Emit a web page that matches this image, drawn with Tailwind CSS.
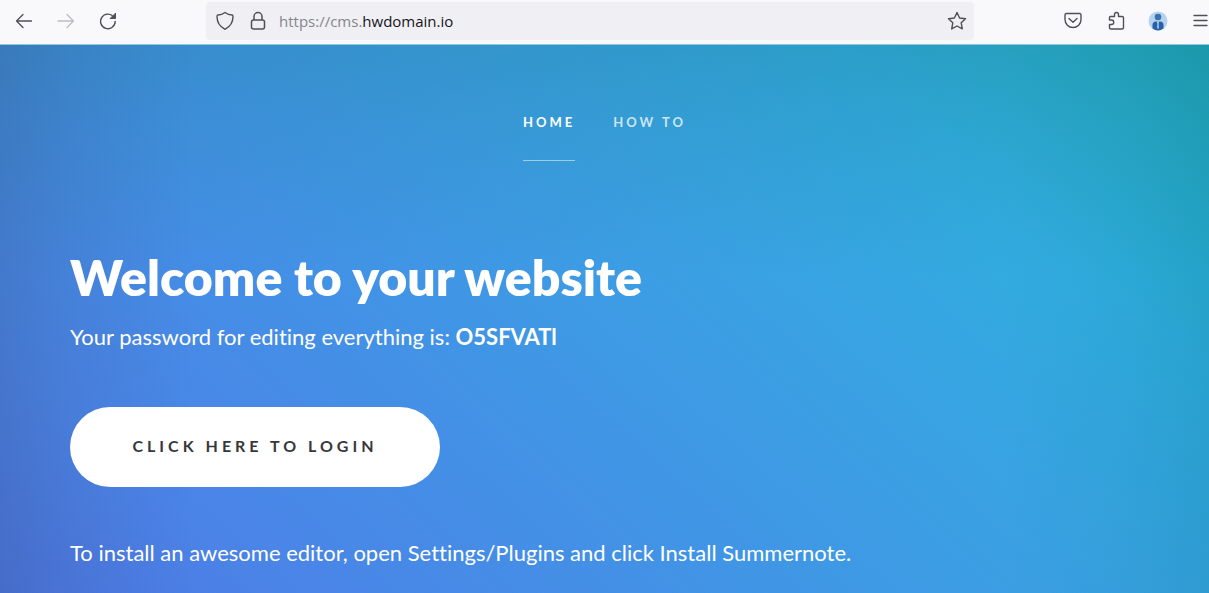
<!DOCTYPE html>
<html lang="en">
<head>
    <meta charset="UTF-8">
    <meta name="viewport" content="width=device-width, initial-scale=1.0">
    <title>Welcome to your website</title>
    <script src="https://cdn.jsdelivr.net/npm/@tailwindcss/browser@4"></script>
</head>
<body class="flex flex-col min-h-screen overflow-x-hidden font-['Lato',sans-serif]">

    <!-- Browser toolbar -->
    <div class="flex items-start h-11 bg-[#f9f9fb] text-[#4f4f56] overflow-hidden">
        <div class="flex items-center gap-[18px] w-[206px] h-[42px] pl-3 shrink-0">
            <button aria-label="Back" class="w-6 flex justify-center">
                <svg class="w-5 h-5" viewBox="0 0 20 20" fill="none" stroke="currentColor" stroke-width="1.3" stroke-linecap="round" stroke-linejoin="round"><path d="M17.500 10H2.500M9 3.500L2.500 10L9 16.500"/></svg>
            </button>
            <button aria-label="Forward" disabled class="w-6 flex justify-center text-[#bdbdc2]">
                <svg class="w-5 h-5" viewBox="0 0 20 20" fill="none" stroke="currentColor" stroke-width="1.3" stroke-linecap="round" stroke-linejoin="round"><path d="M2 10H17.500M11 3.500L17.500 10L11 16.500"/></svg>
            </button>
            <button aria-label="Reload" class="w-6 flex justify-center">
                <svg class="w-5 h-5" viewBox="0 0 20 20" fill="none" stroke="currentColor" stroke-width="1.4" stroke-linecap="round" stroke-linejoin="round"><path d="M17.200 10.500A7.300 7.300 0 1 1 15.400 5.600"/><path d="M17.500 2.500V7.500H12.500Z" fill="currentColor" stroke-width="1"/></svg>
            </button>
        </div>
        <div class="flex items-center w-[768px] h-[38px] mt-0.5 px-2 shrink bg-[#f0f0f4] rounded">
            <svg class="w-[22px] h-[22px] shrink-0" viewBox="0 0 22 22" fill="none" stroke="currentColor" stroke-width="1.4" stroke-linejoin="round"><path d="M11 2.500C13 4 15.500 5 18 5C19 5 19 5.500 19 6.500C19 12 16.500 16.500 11 19.300C5.500 16.500 3 12 3 6.500C3 5.500 3 5 4 5C6.500 5 9 4 11 2.500Z"/></svg>
            <svg class="w-[22px] h-[22px] ml-[11px] shrink-0" viewBox="0 0 22 22" fill="none" stroke="currentColor" stroke-width="1.5"><rect x="4.500" y="10" width="13" height="9" rx="2"/><path d="M7 10V6.500A4 4 0 0 1 15 6.500V10"/></svg>
            <div class="relative grow ml-2.5 font-['Open_Sans',sans-serif] text-[15px]">
                <input type="text" aria-label="Address" value="https://cms.hwdomain.io" class="w-full text-transparent bg-transparent outline-none">
                <div class="absolute inset-0 flex items-center text-[#85858b] pointer-events-none" aria-hidden="true">https://cms.<span class="text-[#15141a]">hwdomain.io</span></div>
            </div>
            <button aria-label="Bookmark this page" class="-mr-0.5">
                <svg class="w-[22px] h-[22px]" viewBox="0 0 22 22" fill="none" stroke="currentColor" stroke-width="1.4" stroke-linejoin="round"><path d="M11 2.500L13.600 8L19.500 8.700L15.200 12.800L16.300 18.900L11 16L5.700 18.900L6.800 12.800L2.500 8.700L8.400 8Z"/></svg>
            </button>
        </div>
        <div class="flex items-center justify-end gap-[21px] grow h-[42px] shrink-0">
            <button aria-label="Save to Pocket">
                <svg class="w-[22px] h-[22px]" viewBox="0 0 22 22" fill="none" stroke="currentColor" stroke-width="1.4" stroke-linecap="round" stroke-linejoin="round"><path d="M4.500 3.500H17.500Q19 3.500 19 5V9.500A8 8 0 0 1 3 9.500V5Q3 3.500 4.500 3.500Z"/><path d="M7 8.500L11 12.300L15 8.500"/></svg>
            </button>
            <button aria-label="Extensions">
                <svg class="w-[22px] h-[22px]" viewBox="0 0 22 22" fill="none" stroke="currentColor" stroke-width="1.4" stroke-linejoin="round"><path d="M4.500 10V7.500Q4.500 6.500 5.500 6.500H9.500V4.500A2 2 0 0 1 13.500 4.500V6.500H17Q18.500 6.500 18.500 8V17.500Q18.500 19 17 19H6Q4.500 19 4.500 17.500V14.500H6.500A2.200 2.200 0 0 0 6.500 10Z"/></svg>
            </button>
            <button aria-label="Account">
                <svg class="w-5 h-5" viewBox="0 0 20 20"><circle cx="10" cy="10" r="9.500" fill="#b5d3f0"/><circle cx="10" cy="6" r="3.300" fill="#3d70b0"/><path d="M4.500 17.500V14Q4.500 10.500 8 10.500H12Q15.500 10.500 15.500 14V17.500Q10 21.500 4.500 17.500Z" fill="#2861a8"/><path d="M9 10.500H11L10.500 12.500L10.700 17.500H9.300L9.500 12.500Z" fill="#dceafa"/></svg>
            </button>
            <button aria-label="Open menu">
                <svg class="w-5 h-5" viewBox="0 0 20 20" fill="none" stroke="currentColor" stroke-width="1.3" stroke-linecap="round"><path d="M5 4.500H18M5 9.500H18M5 14.500H18"/></svg>
            </button>
        </div>
    </div>

    <!-- Page -->
    <div class="grow border-t border-[#8fc9e0] text-white bg-[linear-gradient(to_right,rgb(50_80_120/0.24),rgb(50_80_120/0.12)_6%,transparent_16%,transparent_83%,rgb(0_100_120/0.07)_93%,rgb(0_100_120/0.16)),linear-gradient(to_bottom,rgb(30_110_130/0.24),rgb(30_110_130/0.14)_14%,transparent_42%),linear-gradient(42deg,#4d75e2,#4b83e7_15%,#4391e6_36%,#3aa1e3_60%,#30addf_80%,#22b2c4)]">
        <nav class="flex justify-center gap-[38px] pt-[57px] text-[13px] leading-10 font-bold tracking-[3px]">
            <a href="#home" class="h-[59px] border-b border-white/50">HOME</a>
            <a href="#how-to" class="h-[59px] text-white/75">HOW TO</a>
        </nav>

        <main class="px-[70px] pt-[82px] pb-5">
            <h1 class="text-[50px] leading-[68px] font-extrabold">Welcome to your website</h1>
            <p class="mt-0.5 text-[22px] leading-[48px] [font-variant-ligatures:none]">Your password for editing everything is: <b>O5SFVATl</b></p>
            <a href="#login" class="inline-flex items-center justify-center w-[370px] h-20 mt-[46px] pb-0.5 rounded-full bg-white text-[#37373b] text-base font-bold tracking-[4px]">CLICK HERE TO LOGIN</a>
            <p class="mt-[42px] text-[22px] leading-[48px] [font-variant-ligatures:none]">To install an awesome editor, open Settings/Plugins and click Install Summernote.</p>
        </main>
    </div>

</body>
</html>
